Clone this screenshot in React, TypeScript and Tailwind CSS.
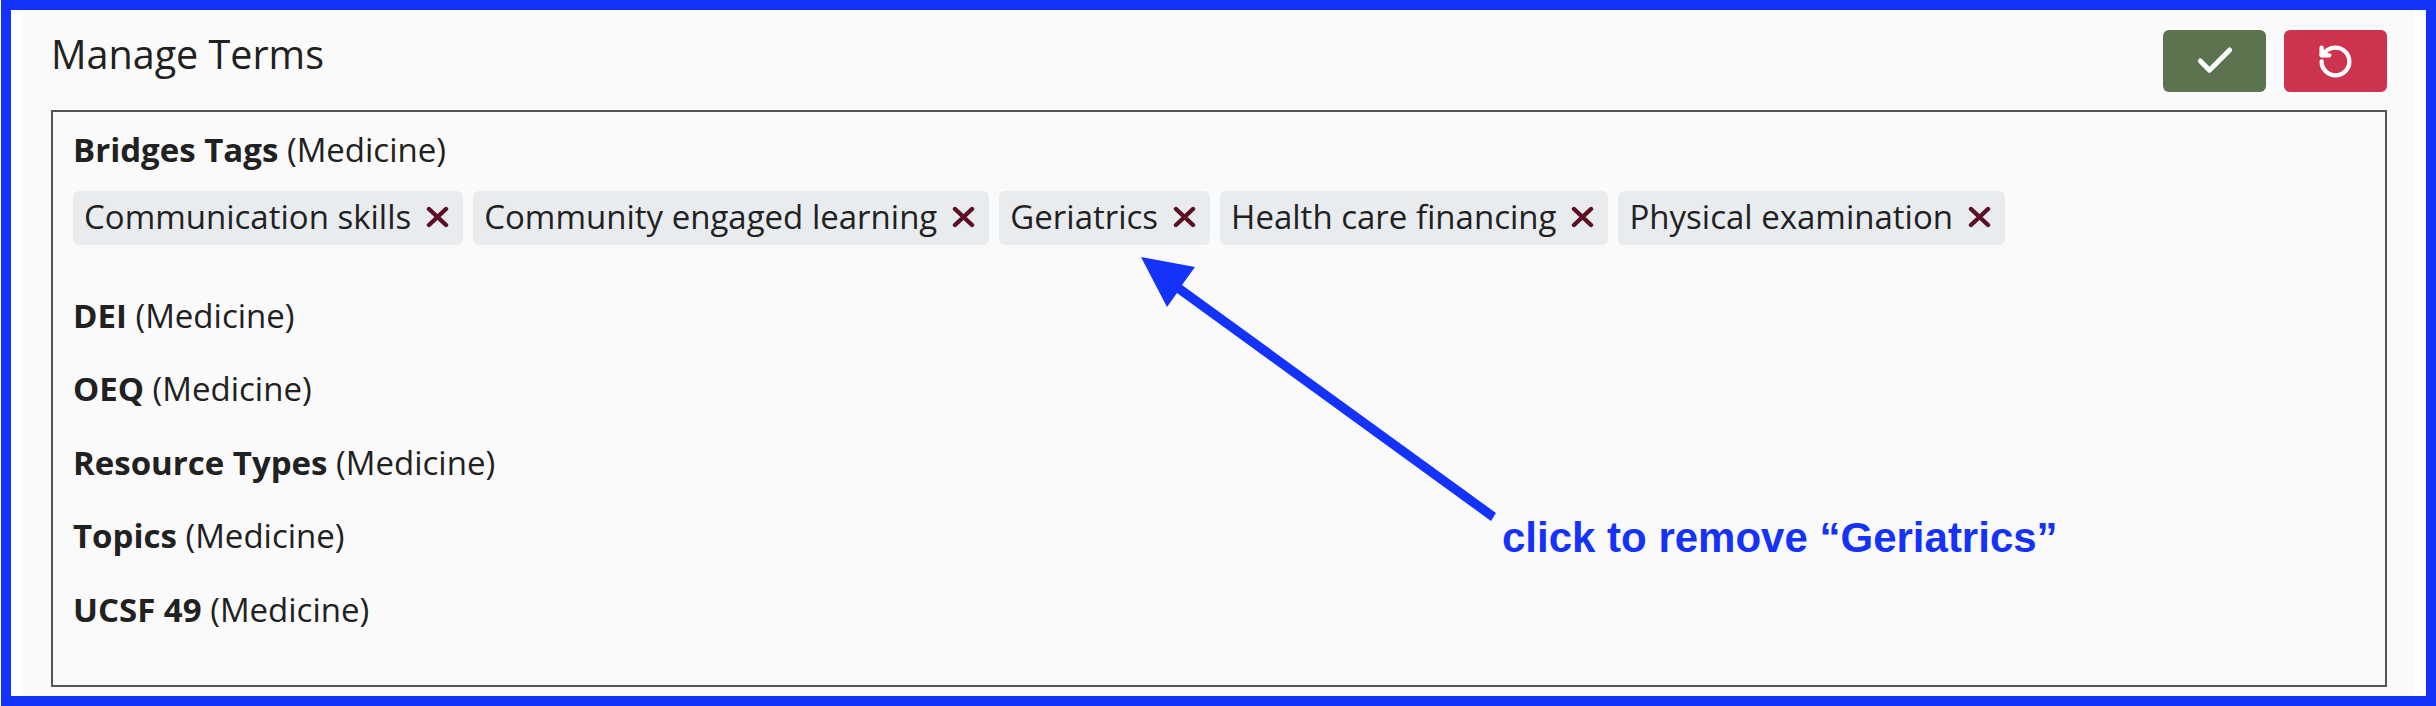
import React, { FC } from 'react';
import { Check, RotateCcw } from 'lucide-react';

const TAGS = ['Communication skills', 'Community engaged learning', 'Geriatrics', 'Health care financing', 'Physical examination'];
const ROWS = ['DEI', 'OEQ', 'Resource Types', 'Topics', 'UCSF 49'];

const Heading: FC<{ name: string }> = ({ name }) => (
  <div className="h-[40px] leading-[40px]">
    <span className="font-bold">{name}</span> (Medicine)
  </div>
);

const RemoveIcon: FC = () => (
  <svg width="23" height="22" viewBox="0 0 23 22" className="text-[#5c0f24]">
    <path d="M3 3 L20 19 M20 3 L3 19" stroke="currentColor" strokeWidth="4.4" strokeLinecap="round" fill="none" />
  </svg>
);

const App: FC = () => {
  return (
    <div className="relative h-[706px] w-[2436px] overflow-hidden bg-white pl-px font-['Open_Sans',sans-serif] text-[33px] text-[#212121]">
      <div className="h-full border-[10px] border-[#1432fa] bg-white pr-[12px] pl-[12px]">
        <div className="h-full bg-[#fafafa] pt-[20px] pr-[27px] pl-[28px]">
          <div className="flex h-[62px] items-start justify-between">
            <h1 className="text-[39.5px] leading-[48px] font-medium">Manage Terms</h1>
            <div className="flex gap-[18px]">
              <button className="flex h-[62px] w-[103px] items-center justify-center rounded-[6px] bg-[#5c734f] text-white">
                <Check size={44} strokeWidth={2.7} />
              </button>
              <button className="flex h-[62px] w-[103px] items-center justify-center rounded-[6px] bg-[#cd334e] text-white">
                <RotateCcw size={37} strokeWidth={2.8} />
              </button>
            </div>
          </div>
          <div className="mt-[18px] h-[577px] border-2 border-[#555555] px-[20px] pt-[18px]">
            <Heading name="Bridges Tags" />
            <div className="mt-[21px] flex gap-[10px]">
              {TAGS.map((tag) => (
                <div key={tag} className="flex h-[54px] items-center gap-[15px] rounded-[6px] bg-[#e9ecef] pr-[14px] pb-[2px] pl-[11px]">
                  <span>{tag}</span>
                  <RemoveIcon />
                </div>
              ))}
            </div>
            <div className="mt-[51px] flex flex-col gap-[33.4px]">
              {ROWS.map((row) => (
                <Heading key={row} name={row} />
              ))}
            </div>
          </div>
        </div>
      </div>
      {/* annotation over the page */}
      <svg className="absolute top-0 left-0" width="2436" height="706">
        <path d="M1141 257 L1195 267 L1182 285 L1496 513 L1491 521 L1177 293 L1167 307 Z" fill="#1432fa" />
      </svg>
      <div className="absolute top-[514px] left-[1502px] font-['Liberation_Sans',sans-serif] text-[42px] leading-[48px] font-bold whitespace-nowrap text-[#1432fa]">
        click to remove “Geriatrics”
      </div>
    </div>
  );
};

export default App;
